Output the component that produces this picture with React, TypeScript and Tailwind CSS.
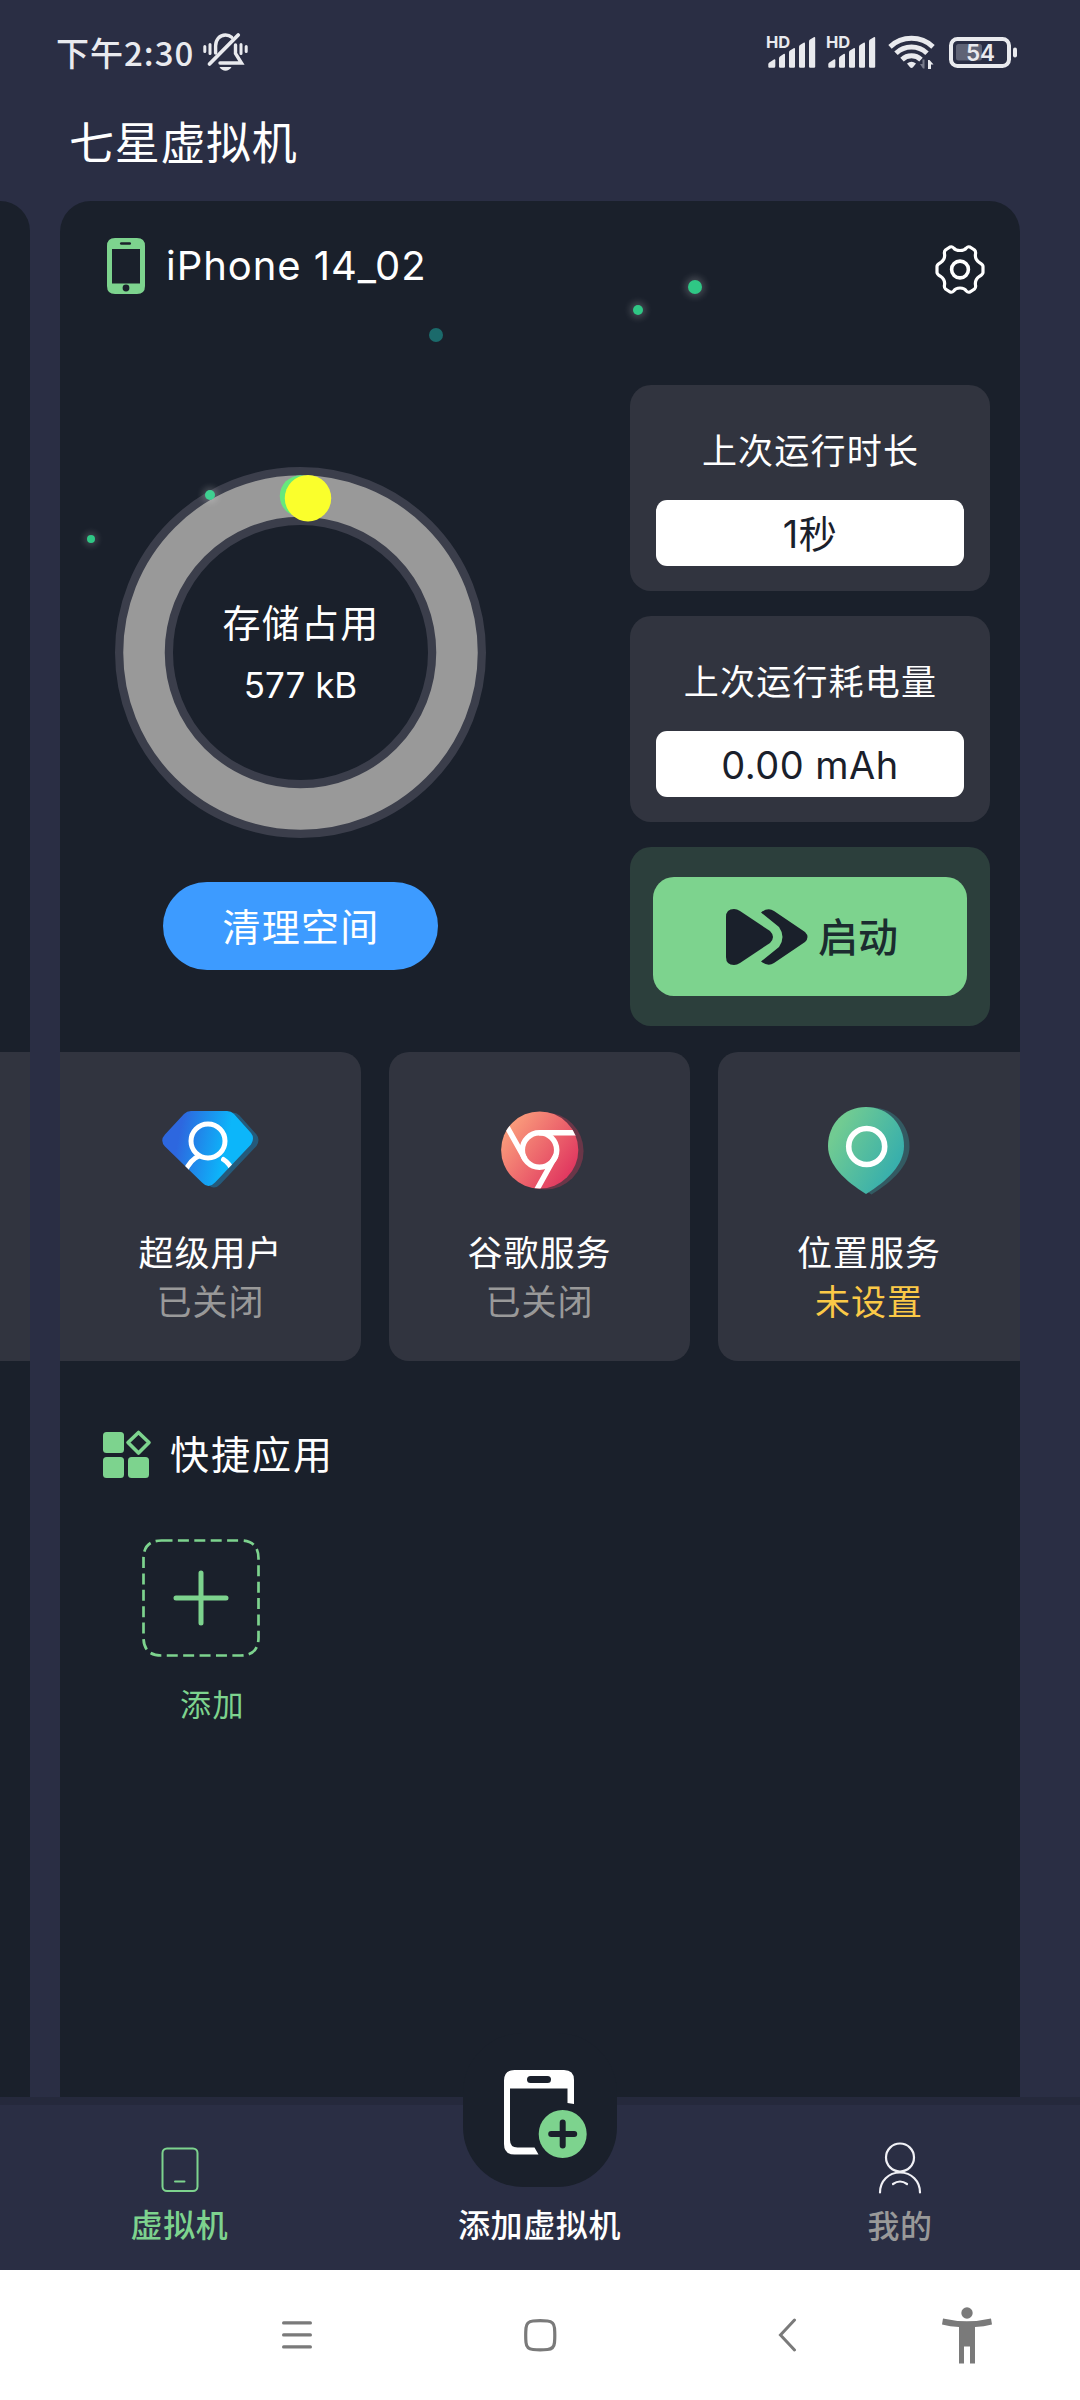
import type { ReactNode } from 'react';

const CJK = "font-['Noto_Sans_CJK_SC',sans-serif]";
const LATIN = "font-['Inter','Noto_Sans_CJK_SC',sans-serif]";

function MutedBell() {
  return (
    <svg width="45" height="40" viewBox="0 0 45 40" fill="none" stroke="#e9eaee" strokeWidth="3.4" strokeLinecap="round">
      <path d="M1.8 14.5v5M7 12.5v9M38 12.5v9M43.2 14.5v5" strokeWidth="3" />
      <path d="M12.6 21V14c0-6.400 4-11 9.900-11 2.600 0 4.600.8 6.200 2.200M32.500 13v8.500l6 9.500H17" />
      <path d="M35.200 3 6.500 32" strokeWidth="3.800" />
      <path d="M16.500 35h12c-1.500 2.600-3.700 3.800-6 3.800s-4.500-1.200-6-3.800z" fill="#e9eaee" stroke="none" />
    </svg>
  );
}

function Signal() {
  return (
    <svg width="60" height="40" viewBox="0 0 60 40" fill="#e9eaee">
      <text x="0" y="14.500" fontSize="16.500" fontWeight="700" className="font-['Inter',sans-serif]">HD</text>
      <path d="M2.300 31.500q0-1.300 1-2l4.600-3.100q1.400-.8 1.400.8v6q0 1.500-1.500 1.500H3.300q-1 0-1-1z" />
      <path d="M13 25.500q0-1.300 1-2l3.600-2.600q1.400-.8 1.400.8v12q0 1-1.200 1h-3.600q-1.200 0-1.200-1z" />
      <path d="M23 19.500q0-1.300 1-2l3.600-2.200q1.400-.8 1.400.8v17.600q0 1-1.200 1h-3.600q-1.200 0-1.200-1z" />
      <path d="M33 14q0-1.300 1-2l3.600-2.200q1.400-.8 1.400.8v23.100q0 1-1.200 1h-3.600q-1.200 0-1.200-1z" />
      <path d="M43 8.500q0-1.300 1-2l3.800-2.300q1.400-.8 1.400.8v28.700q0 1-1.200 1h-3.800q-1.200 0-1.200-1z" />
    </svg>
  );
}

function Wifi() {
  return (
    <svg width="48" height="40" viewBox="0 0 48 40" fill="none" stroke="#e9eaee" strokeWidth="5">
      <path d="M2 13.800a31.500 31.500 0 0 1 43 0" />
      <path d="M8 20.300a22.500 22.500 0 0 1 31 0" />
      <path d="M14 26.600a13.800 13.800 0 0 1 19 0" />
      <path d="M19 30.500q4.500-3.600 9 0l-3 3.800q-1.500 1.300-3 0z" fill="#e9eaee" stroke="none" />
      <path d="M36.500 26.500v9h-1.500l-3-4.500h2.500v-4.500z" fill="#777a8a" stroke="none" />
      <path d="M40 36v-9h1.500l4 4.500h-2.500v4.500z" fill="#e9eaee" stroke="none" />
    </svg>
  );
}

function Battery() {
  return (
    <svg width="70" height="32" viewBox="0 0 70 32">
      <rect x="2" y="2" width="58" height="27" rx="6.500" fill="none" stroke="#e9eaee" strokeWidth="4" />
      <rect x="7" y="7" width="26" height="16.500" rx="2.500" fill="#5f6375" />
      <rect x="64" y="10.500" width="4" height="10" rx="2" fill="#e9eaee" />
      <text x="31.500" y="23.500" textAnchor="middle" fontSize="22.500" fontWeight="600" fill="#e9eaee" className="font-['Inter',sans-serif]">54</text>
    </svg>
  );
}

function StatusBar() {
  return (
    <header className="flex h-[104px] shrink-0 items-center justify-between pl-[56px] pr-[61px]">
      <div className="flex items-center gap-[9px]">
        <span className={`${CJK} -mt-px text-[33px] leading-[40px] font-medium tracking-[1px] text-[#e9eaee]`}>下午2:30</span>
        <MutedBell />
      </div>
      <div className="flex items-center pt-px">
        <Signal />
        <Signal />
        <span className="ml-[2px]"><Wifi /></span>
        <span className="ml-[13px]"><Battery /></span>
      </div>
    </header>
  );
}

function PhoneGlyph() {
  return (
    <svg width="38" height="56" viewBox="0 0 38 56">
      <path fillRule="evenodd" fill="#7dd38e" d="M8 0h22q8 0 8 8v40q0 8-8 8H8q-8 0-8-8V8q0-8 8-8zM5 11v34.500h28V11z" />
      <rect x="13" y="4.300" width="11" height="2.400" rx="1.200" fill="#1a202b" />
      <circle cx="19" cy="50" r="3.400" fill="#1a202b" />
    </svg>
  );
}

function Gear() {
  const half = 'M25 5.500Q29.500 5.500 31.300 3 33 1.200 34.800 2L39.500 5Q41 6.300 40.500 9 39.600 14.300 44.500 17.700 48 19.800 48 21.500V27.500Q48 29.200 44.500 31.300 39.600 34.700 40.500 40 41 42.700 39.500 44L34.800 47Q33 47.800 31.300 46 29.500 43 25 43';
  return (
    <svg width="50" height="50" viewBox="0 0 50 50" fill="none" stroke="#fff" strokeWidth="3.200">
      <path d={half} />
      <path d={half} transform="matrix(-1 0 0 1 50 0)" />
      <circle cx="25" cy="24.500" r="8.400" strokeWidth="3.600" />
    </svg>
  );
}

function UserGem() {
  const gem = 'M29 0h36q4 0 7 3l17 19q4 5 0 11.500L53 71.500q-6.500 7-13 0L3 35.500q-5.500-6 0-12L22 3q3-3 7-3z';
  return (
    <svg width="98" height="80" viewBox="0 0 98 80" fill="none">
      <defs>
        <linearGradient id="gem" x1="22" x2="70" y1="0" y2="10" gradientUnits="userSpaceOnUse">
          <stop stopColor="#2d67df" />
          <stop offset="1" stopColor="#0cb6fa" />
        </linearGradient>
        <clipPath id="gemClip"><path d={gem} /></clipPath>
      </defs>
      <path d={gem} transform="translate(5.500 1.500)" fill="#255a7b" />
      <path d={gem} fill="url(#gem)" />
      <g stroke="#fff" strokeWidth="5" clipPath="url(#gemClip)">
        <circle cx="46" cy="30" r="17" />
        <path d="M38 44.500Q28 48.500 23 61" strokeWidth="5" />
        <path d="M61.500 48.500Q67 52 71 60" strokeWidth="5" strokeLinecap="round" />
      </g>
    </svg>
  );
}

function ChromeDisc() {
  return (
    <svg width="84" height="80" viewBox="0 0 84 80" fill="none">
      <defs>
        <linearGradient id="disc" x1="8" x2="72" y1="15" y2="62" gradientUnits="userSpaceOnUse">
          <stop stopColor="#fa9c7b" />
          <stop offset="1" stopColor="#e0355f" />
        </linearGradient>
        <clipPath id="discClip"><circle cx="38.700" cy="39" r="38.600" /></clipPath>
      </defs>
      <circle cx="44" cy="40" r="38.600" fill="#6a3648" />
      <circle cx="38.700" cy="39" r="38.600" fill="url(#disc)" />
      <g stroke="#fff" strokeWidth="5.500" clipPath="url(#discClip)">
        <circle cx="38.500" cy="39" r="17.200" />
        <path d="M38 21.700H75M5 14 24 48M55 44 34 82" />
      </g>
    </svg>
  );
}

function MapPin() {
  const pin = 'M38 0C60 0 76 17 76 39 76 58 59 74 38 87 17 74 0 58 0 39 0 17 16 0 38 0z';
  return (
    <svg width="82" height="88" viewBox="0 0 82 88" fill="none">
      <defs>
        <linearGradient id="pin" x1="8" x2="68" y1="25" y2="58" gradientUnits="userSpaceOnUse">
          <stop stopColor="#71cb92" />
          <stop offset="1" stopColor="#38afac" />
        </linearGradient>
      </defs>
      <path d={pin} transform="translate(5.500 .5)" fill="#335a62" />
      <path d={pin} fill="url(#pin)" />
      <circle cx="38.700" cy="39.500" r="18" stroke="#fff" strokeWidth="5.600" />
    </svg>
  );
}

function StorageRing() {
  return (
    <div className="relative flex h-[371px] w-[371px] flex-col items-center pt-[126px] text-white">
      <svg className="absolute inset-0" width="371" height="371" viewBox="0 0 371 371" fill="none">
        <circle cx="185.500" cy="185.500" r="156.500" stroke="#3b3e4b" strokeWidth="58" />
        <circle cx="185.500" cy="185.500" r="156.500" stroke="#999" strokeWidth="41.500" />
        <circle cx="185.500" cy="29" r="20.700" fill="#66e87c" />
        <circle cx="193" cy="31.200" r="23.200" fill="#faff2c" />
      </svg>
      <span className={`${CJK} relative pl-[1px] text-[38px] leading-[56px] tracking-[1.200px]`}>存储占用</span>
      <span className={`${LATIN} relative mt-[11px] text-[35px] leading-[50px]`}>577 kB</span>
    </div>
  );
}

function Stat({ label, children }: { label: string; children: ReactNode }) {
  return (
    <section className="flex h-[206px] flex-col items-center rounded-[21px] bg-[#31343f] px-[26px] pt-[37px]">
      <h2 className={`${CJK} pl-px text-[35px] leading-[54px] tracking-[1.200px] text-white`}>{label}</h2>
      <div className={`${LATIN} mt-[24px] flex h-[66px] w-full items-center justify-center rounded-[11px] bg-white pt-px text-[38px] leading-none tracking-[0.500px] text-[#1a202b]`}>
        {children}
      </div>
    </section>
  );
}

function Tile({ icon, name, state, shape, stateColor }: { icon: ReactNode; name: string; state: string; shape: string; stateColor: string }) {
  return (
    <section className={`flex h-[309px] flex-col items-center bg-[#31343f] ${shape}`}>
      <div className="flex h-[173px] items-center justify-center pt-[24px]">{icon}</div>
      <span className={`${CJK} text-[35px] leading-[52px] tracking-[1px] text-white`}>{name}</span>
      <span className={`${CJK} -mt-[3px] text-[35px] leading-[52px] tracking-[1px] ${stateColor}`}>{state}</span>
    </section>
  );
}

const SPARKS = [
  'left-[628px] top-[79px] size-[14px] bg-[#2fc785] shadow-[0_0_7px_3px_#ffffff30]',
  'left-[573px] top-[104px] size-[10px] bg-[#2fc785] shadow-[0_0_7px_3px_#ffffff30]',
  'left-[369px] top-[127px] size-[14px] bg-[#1b6a6b]',
  'left-[145px] top-[289px] size-[10px] bg-[#3fd091] shadow-[0_0_6px_3px_#ffffff30]',
  'left-[27px] top-[334px] size-[8px] bg-[#2fc785] shadow-[0_0_6px_3px_#ffffff28]',
];

function MachinePanel() {
  return (
    <main className="relative ml-[30px] w-[960px] overflow-hidden rounded-t-[31px] bg-[#1a202b]">
      <div className="flex h-[184px] items-start justify-between pl-[47px] pr-[35px] pt-[37px]">
        <div className="flex items-center gap-[21px]">
          <PhoneGlyph />
          <h1 className={`${LATIN} text-[40px] leading-[56px] tracking-[0.950px] text-white`}>iPhone 14_02</h1>
        </div>
        <span className="mt-[7px]"><Gear /></span>
      </div>

      <div className="flex h-[641px] pr-[30px]">
        <div className="flex w-[570px] flex-col pl-[55px] pt-[82px]">
          <StorageRing />
          <button className={`${CJK} ml-[48px] mt-[44px] h-[88px] w-[275px] rounded-full bg-[#3d9bff] pb-[2px] pl-px text-[38px] leading-[56px] tracking-[1.200px] text-white`}>
            清理空间
          </button>
        </div>
        <div className="flex w-[360px] flex-col">
          <Stat label="上次运行时长">1秒</Stat>
          <div className="mt-[25px]"><Stat label="上次运行耗电量">0.00 mAh</Stat></div>
          <div className="mt-[25px] flex h-[179px] items-center rounded-[21px] bg-[#2c3f3c] px-[23px]">
            <button className="flex h-[119px] w-full items-center justify-center gap-[10px] rounded-[21px] bg-[#7dd38e] pl-[4px]">
              <svg width="82" height="56" viewBox="0 0 82 56" fill="#1a202b">
                <path d="M0 8Q0 0 8 0q3 0 6 2L44 22q6 6 0 12L14 54q-3 2-6 2-8 0-8-8z" />
                <path d="M35 3.500Q42-2 48 2L79 23q5 5 0 10L48 54q-6 4-13-1.500L53 38q7-10 0-20z" />
              </svg>
              <span className={`${CJK} -mt-[4px] text-[40px] leading-[56px] font-medium text-[#1b2c2f]`}>启动</span>
            </button>
          </div>
        </div>
      </div>

      <div className="mt-[26px] grid grid-cols-[301px_301px_302px] gap-[28px]">
        <Tile icon={<UserGem />} name="超级用户" state="已关闭" shape="rounded-r-[20px]" stateColor="text-[#999]" />
        <Tile icon={<span className="pl-[6px]"><ChromeDisc /></span>} name="谷歌服务" state="已关闭" shape="rounded-[20px]" stateColor="text-[#999]" />
        <Tile icon={<MapPin />} name="位置服务" state="未设置" shape="rounded-l-[20px]" stateColor="text-[#fbc947]" />
      </div>

      <div className="mt-[62px] flex h-[62px] items-center gap-[18px] pl-[42px]">
        <svg width="50" height="50" viewBox="0 0 50 50" fill="#7dd38e">
          <rect x="1" y="3" width="21" height="21" rx="3.500" />
          <rect x="1" y="28" width="21" height="21" rx="3.500" />
          <rect x="26" y="28" width="21" height="21" rx="3.500" />
          <path d="M36.500 3.500 47 13.500 36.500 24 26 13.500z" fill="none" stroke="#7dd38e" strokeWidth="3.600" strokeLinejoin="round" />
        </svg>
        <h2 className={`${CJK} -mt-[4px] text-[39px] leading-[58px] tracking-[2px] text-white`}>快捷应用</h2>
      </div>

      <button className="ml-[82px] mt-[54px] flex w-[118px] flex-col items-center">
        <svg width="118" height="118" viewBox="0 0 118 118" fill="none" stroke="#7dd38e">
          <path d="M19.500 1.500h79q18 0 18 18v79q0 18-18 18h-79q-18 0-18-18v-79q0-18 18-18z" strokeWidth="2.700" strokeDasharray="11 5.400" />
          <path d="M59 34v50M34 59h50" strokeWidth="5" strokeLinecap="round" />
        </svg>
        <span className={`${CJK} ml-[23px] mt-[22px] text-[31px] leading-[48px] tracking-[1.500px] text-[#7dd38e]`}>添加</span>
      </button>

      {SPARKS.map((spark) => (
        <i key={spark} className={`absolute rounded-full ${spark}`} />
      ))}
    </main>
  );
}

function NavBar() {
  const label = `${CJK} text-[32px] leading-[46px] font-medium tracking-[0.600px]`;
  return (
    <nav className="relative flex h-[173px] shrink-0 border-t-[8px] border-[#25293c] bg-[#2a2e44]">
      <div className="absolute left-[463px] top-[-72px] flex h-[154px] w-[154px] justify-center rounded-[60px] bg-[#1a202b] pl-[12px] pt-[37px]">
        <svg width="84" height="90" viewBox="0 0 84 90">
          <path d="M10.500 0h49.500q10 0 10 10v24l-6.500-1V18.500H6V70q0 7.500 7.500 7.500H30.500L34.500 84.500H10.500Q0 84.500 0 74V10.500Q0 0 10.500 0z" fill="#fff" />
          <rect x="23" y="6" width="24" height="7" rx="3.500" fill="#1a202b" />
          <circle cx="58.700" cy="64" r="24" fill="#7dd38e" />
          <path d="M58.700 52.500v23M47.200 64h23" stroke="#1a202b" strokeWidth="6" strokeLinecap="round" />
        </svg>
      </div>
      <div className="flex w-[359px] flex-col items-center pt-[42px] text-[#7dd38e]">
        <svg width="38" height="46" viewBox="0 0 38 46" fill="none" stroke="currentColor" strokeWidth="2">
          <rect x="1.500" y="1.500" width="35" height="42.500" rx="4.500" />
          <path d="M14 34.500h9.500" strokeLinecap="round" />
        </svg>
        <span className={`${label} mt-[7px]`}>虚拟机</span>
      </div>
      <div className="flex w-[361px] flex-col items-center pt-[95px] text-white">
        <span className={label}>添加虚拟机</span>
      </div>
      <div className="flex w-[360px] flex-col items-center pt-[37px]">
        <svg width="44" height="52" viewBox="0 0 44 52" fill="none" stroke="#f1f1f6" strokeWidth="2.200" strokeLinecap="round">
          <circle cx="22" cy="15.500" r="14" />
          <path d="M2 50.500C2 39 10.500 30.500 22 30.500S42 39 42 50.500M15 42q7-5 14 0" />
        </svg>
        <span className={`${label} mt-[7px] text-[#999]`}>我的</span>
      </div>
    </nav>
  );
}

function SystemBar() {
  return (
    <footer className="flex h-[130px] shrink-0 items-center bg-white pl-[282px] text-[#7a7a7a]">
      <svg width="30" height="30" viewBox="0 0 30 30" stroke="currentColor" strokeWidth="3.200" strokeLinecap="round">
        <path d="M1.600 2.900h26.800M1.600 14.900h26.800M1.600 26.900h26.800" />
      </svg>
      <svg className="ml-[212px]" width="33" height="33" viewBox="0 0 33 33" fill="none" stroke="currentColor" strokeWidth="3.200">
        <path d="M9 2q7-.6 14.500 0 6.500.5 7 7 .6 7.500 0 14.500-.5 6.500-7 7-7.500.6-14.500 0-6.500-.5-7-7-.6-7 0-14.500.5-6.500 7-7z" />
      </svg>
      <svg className="ml-[220px]" width="20" height="34" viewBox="0 0 20 34" fill="none" stroke="currentColor" strokeWidth="3" strokeLinecap="round">
        <path d="M17.500 2 3.500 17l14 15" />
      </svg>
      <svg className="ml-[145px]" width="50" height="57" viewBox="0 0 50 57" fill="currentColor">
        <circle cx="25" cy="6" r="5.700" />
        <path d="M1 11.500Q25 17 49 11.500L50 17.500Q42 19.500 33 20V56.500H28V39.500H22V56.500H17V20Q8 19.500 0 17.500z" />
      </svg>
    </footer>
  );
}

export default function App() {
  return (
    <div className="flex h-[2400px] w-[1080px] flex-col overflow-hidden bg-[#2a2e44]">
      <StatusBar />
      <div className={`${CJK} h-[97px] shrink-0 pl-[69px] pt-[5px] text-[45px] leading-[64px] tracking-[0.700px] text-white`}>七星虚拟机</div>
      <div className="flex h-[1896px] shrink-0">
        <aside className="w-[30px] rounded-tr-[31px] bg-[#1a202b] pt-[851px]">
          <div className="h-[309px] bg-[#31343f]" />
        </aside>
        <MachinePanel />
      </div>
      <NavBar />
      <SystemBar />
    </div>
  );
}
